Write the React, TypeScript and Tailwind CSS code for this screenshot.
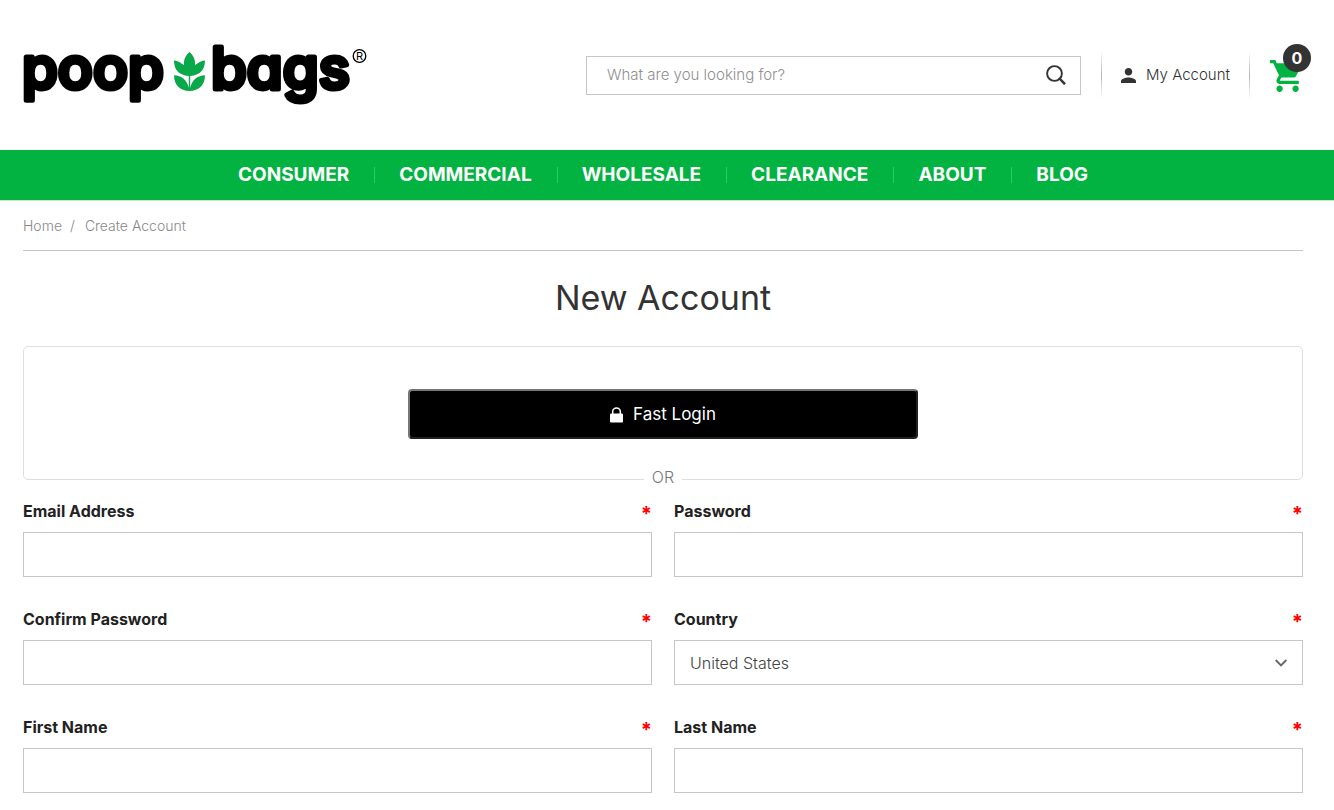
import type { InputHTMLAttributes } from 'react'

const navLinks = ['Consumer', 'Commercial', 'Wholesale', 'Clearance', 'About', 'Blog']

function Logo() {
  return (
    <svg viewBox="0 -15 346 84" className="h-[84px] w-[346px]" role="img" aria-label="poop bags">
      <g
        fill="#000"
        stroke="#000"
        strokeWidth="5"
        strokeLinejoin="round"
        className="font-['Inter',sans-serif] text-[58px] font-medium [font-feature-settings:'cv11']"
      >
        <text x="-1" y="41">poop</text>
        <text x="188" y="41">bags</text>
      </g>
      <path
        fill="#09a84a"
        d="M166.500 4C162 8 160.500 12.500 161 17C157.500 14.500 154 12 151 12.500C151 21 155 27 165.800 28V40C164 31.500 158 27.500 151 27.300C151 37 157 43 166.500 43C176 43 182 37 182 27.300C175 27.500 169 31.500 167.200 40V28C178 27 182 21 182 12.500C179 12 175.500 14.500 172 17C172.500 12.500 171 8 166.500 4Z"
      />
      <circle cx="336.500" cy="8" r="6.300" fill="none" stroke="#000" strokeWidth="1.300" />
      <text x="333" y="12" className="font-['Inter',sans-serif] text-[11px]">R</text>
    </svg>
  )
}

function Divider() {
  return <span className="h-12 w-px bg-gradient-to-b from-white via-[#b5b5b5] to-white" />
}

function FieldLabel({ id, label }: { id: string; label: string }) {
  return (
    <label htmlFor={id} className="mb-[10px] flex h-[22px] items-center justify-between text-base font-bold text-[#222]">
      {label}
      <span className="h-[18px] text-xl leading-6 text-[#f00]">*</span>
    </label>
  )
}

function Field({ id, label, ...rest }: { id: string; label: string } & InputHTMLAttributes<HTMLInputElement>) {
  return (
    <div>
      <FieldLabel id={id} label={label} />
      <input id={id} className="block h-[45px] w-full border border-[#c6c6c6] px-4 text-base text-[#555] outline-none" {...rest} />
    </div>
  )
}

export default function App() {
  return (
    <div className="bg-white font-['Inter',sans-serif] text-[#333]">
      <header className="flex h-[150px] items-center justify-between pr-8 pl-[23px]">
        <a href="#" className="block">
          <Logo />
        </a>
        <div className="flex items-center">
          <form className="flex h-[39px] w-[495px] items-center border border-[#c6c6c6] pr-[14px] pl-5" role="search">
            <input
              type="search"
              aria-label="Search"
              placeholder="What are you looking for?"
              className="min-w-0 flex-1 text-[15px] font-light outline-none placeholder:text-[#8f8f8f]"
            />
            <button type="button" aria-label="Search">
              <svg viewBox="0 0 20 20" className="h-5 w-5" fill="none" stroke="#333">
                <circle cx="8.500" cy="8.500" r="7.400" strokeWidth="1.900" />
                <path d="M13 13L19 19.200" strokeWidth="2.500" />
              </svg>
            </button>
          </form>
          <div className="ml-5 flex items-center">
            <Divider />
            <a href="#" className="mx-[19px] flex items-center gap-[10px] text-[15px] font-light whitespace-nowrap">
              <svg viewBox="4 4 16 16" className="h-[15px] w-[15px]" fill="#333">
                <path d="M12 12c2.210 0 4-1.790 4-4s-1.790-4-4-4-4 1.790-4 4 1.790 4 4 4zm0 2c-2.670 0-8 1.340-8 4v2h16v-2c0-2.660-5.330-4-8-4z" />
              </svg>
              My Account
            </a>
            <Divider />
          </div>
          <a href="#" aria-label="Cart" className="relative ml-5 block pt-0.5">
            <svg viewBox="1 2 20 20" className="h-8 w-8" fill="#03b341">
              <path d="M7 18c-1.100 0-1.990.9-1.990 2S5.900 22 7 22s2-.9 2-2-.9-2-2-2zM1 2v2h2l3.600 7.590-1.350 2.450c-.16.28-.25.61-.25.960 0 1.100.9 2 2 2h12v-2H7.420c-.14 0-.25-.11-.25-.25l.03-.12.9-1.630h7.450c.75 0 1.410-.41 1.750-1.030l3.580-6.490A1.003 1.003 0 0 0 20 4H5.210l-.94-2H1zm16 16c-1.100 0-1.990.9-1.990 2s.89 2 1.990 2 2-.9 2-2-.9-2-2-2z" />
            </svg>
            <span className="absolute -top-[14px] left-[13px] flex h-7 w-7 items-center justify-center rounded-full bg-[#333] text-base font-bold text-white">
              0
            </span>
          </a>
        </div>
      </header>

      <nav className="border-b border-[#c0e9c8] bg-[#03b341] pr-2">
        <ul className="flex h-[50px] items-center justify-center">
          {navLinks.map((name, i) => (
            <li key={name} className="flex items-center">
              {i > 0 && <span className="mr-6 ml-[25px] h-4 w-px bg-[#2bcb62]" />}
              <a href="#" className="text-[19px] font-bold text-white uppercase">
                {name}
              </a>
            </li>
          ))}
        </ul>
      </nav>

      <main className="pr-[31px] pb-[18px] pl-[23px]">
        <nav aria-label="Breadcrumb" className="flex h-[50px] items-center gap-2 border-b border-[#c6c6c6] text-sm font-light text-[#888]">
          <a href="#">Home</a>
          <span>/</span>
          <a href="#" className="ml-[2px]">Create Account</a>
        </nav>

        <h1 className="mt-[25px] text-center text-[34px] leading-[44px] text-[#333]">New Account</h1>

        <section className="relative mt-[26px] flex h-[134px] justify-center rounded-[5px] border border-[#dedede] pt-[42px]">
          <button
            type="button"
            className="flex h-[50px] w-[510px] max-w-full items-center justify-center gap-[10px] rounded-[4px] border-2 border-t-[#767676] border-r-[#212121] border-b-[#212121] border-l-[#767676] bg-black pt-0.5 text-[17px] text-white"
          >
            <svg viewBox="0 0 13 16" className="h-4 w-[13px]">
              <rect y="6.500" width="13" height="9" rx="1.200" fill="#fff" />
              <path d="M2.700 7V4.300a3.800 3.300 0 0 1 7.600 0V7" fill="none" stroke="#fff" strokeWidth="1.500" />
            </svg>
            Fast Login
          </button>
          <span className="absolute -bottom-[10px] bg-white px-2 text-base leading-6 font-light text-[#777]">OR</span>
        </section>

        <form className="mt-5 grid grid-cols-2 gap-x-[22px] gap-y-[31px]">
          <Field id="email" label="Email Address" type="email" />
          <Field id="password" label="Password" type="password" />
          <Field id="confirm" label="Confirm Password" type="password" />
          <div>
            <FieldLabel id="country" label="Country" />
            <div className="relative">
              <select
                id="country"
                className="block h-[45px] w-full appearance-none border border-[#c6c6c6] bg-white pr-10 pl-[15px] text-base font-light text-[#444] outline-none"
              >
                <option>United States</option>
              </select>
              <svg viewBox="0 0 12 8" className="pointer-events-none absolute top-[19px] right-4 h-2 w-3" fill="none" stroke="#666" strokeWidth="1.900">
                <path d="M.7 1L6 6.300L11.300 1" />
              </svg>
            </div>
          </div>
          <Field id="first-name" label="First Name" />
          <Field id="last-name" label="Last Name" />
        </form>
      </main>
    </div>
  )
}
